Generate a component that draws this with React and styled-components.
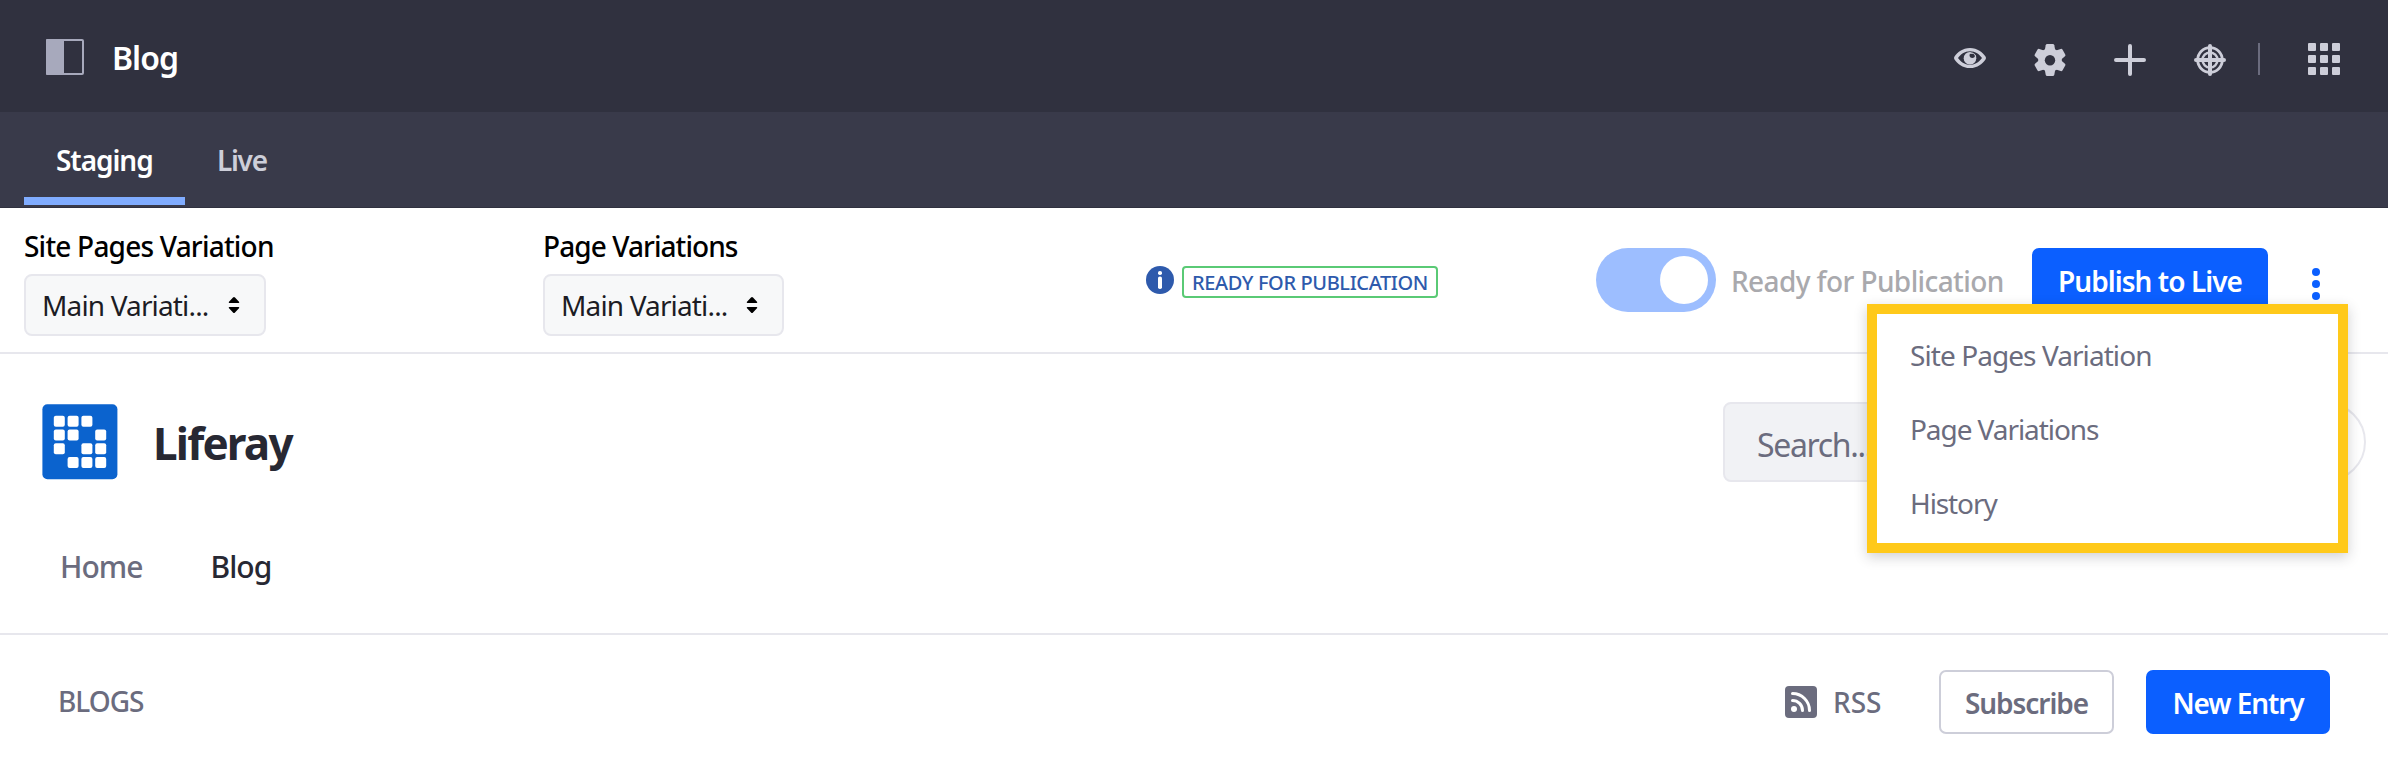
import React from 'react';
import styled, { createGlobalStyle } from 'styled-components';

const GlobalStyle = createGlobalStyle`
  * { box-sizing: border-box; }
  body {
    margin: 0;
    background: #fff;
    font-family: 'Noto Sans', 'Open Sans', sans-serif;
    font-size: 28px;
    color: #272833;
  }
`;

const Page = styled.div`
  position: relative;
  height: 781px;
  overflow: hidden;
`;

const Label = styled.span`
  white-space: pre;
  font-weight: ${(p) => p.$weight || 500};
  letter-spacing: ${(p) => p.$track || 0}px;
`;

/* Top control bar */
const ControlBar = styled.header`
  display: flex;
  align-items: center;
  justify-content: space-between;
  height: 112px;
  padding: 2px 48px 0 46px;
  background: #30313f;
`;

const BarTitle = styled.div`
  display: flex;
  align-items: center;
  gap: 28px;
  color: #fff;
  font-size: 32px;
`;

const BarIcons = styled.div`
  display: flex;
  align-items: center;
  gap: 48px;
  padding-top: 6px;
  color: #cdced9;

  svg { display: block; }
`;

const IconGroup = styled.div`
  display: flex;
  align-items: center;
  gap: 32px;
`;

const AppsGroup = styled(IconGroup)`
  gap: 48px;
  margin-top: -2px;
`;

const Divider = styled.span`
  width: 2px;
  height: 32px;
  margin-top: -1px;
  background: #6b6c7e;
`;

/* Tabs */
const Tabs = styled.nav`
  display: flex;
  height: 96px;
  padding-left: 24px;
  background: #393a4a;
  border-bottom: 1px solid #30313f;
`;

const Tab = styled.a`
  display: flex;
  align-items: center;
  height: 93px;
  padding: 2px 31px 0 32px;
  color: ${(p) => (p.$active ? '#fff' : '#cdced9')};
  box-shadow: ${(p) => (p.$active ? 'inset 0 -8px 0 #80acff' : 'none')};
  width: ${(p) => (p.$active ? '161px' : 'auto')};
`;

/* Staging bar */
const StagingBar = styled.section`
  display: flex;
  height: 146px;
  padding: 18px 60px 0 24px;
  border-bottom: 2px solid #e7e7ed;
`;

const Field = styled.div`
  display: flex;
  flex-direction: column;
  width: ${(p) => p.$width}px;
  padding-top: 1px;
  gap: 9px;
  line-height: 38px;
  color: #000;
`;

const Select = styled.div`
  display: flex;
  align-items: center;
  justify-content: space-between;
  width: ${(p) => p.$width}px;
  height: 62px;
  padding: 0 24px 0 16px;
  border: 2px solid #e7e7ed;
  border-radius: 8px;
  background: #f7f8f9;
  color: #1c1c24;
`;

const Status = styled.div`
  display: flex;
  align-items: flex-start;
  gap: 8px;
  padding-top: 40px;
  width: 450px;
`;

const StatusBadge = styled.span`
  display: flex;
  align-items: center;
  height: 32px;
  width: 256px;
  padding: 1px 0 0 8px;
  border: 2px solid #5aca75;
  border-radius: 4px;
  font-size: 20px;
  color: #2e5aac;
`;

const Actions = styled.div`
  display: flex;
  align-items: center;
  height: 64px;
  margin-top: 22px;
`;

const Toggle = styled.span`
  display: flex;
  justify-content: flex-end;
  align-items: center;
  width: 120px;
  height: 64px;
  padding: 8px;
  border-radius: 32px;
  background: #9dbeff;
`;

const Knob = styled.span`
  width: 48px;
  height: 48px;
  border-radius: 50%;
  background: #fff;
`;

const ToggleLabel = styled.span`
  width: 301px;
  margin-left: 15px;
  padding-top: 1px;
  color: #a9a9ad;
`;

const Button = styled.button`
  display: flex;
  align-items: center;
  justify-content: center;
  width: ${(p) => p.$width}px;
  height: 64px;
  padding: 1px 0 0;
  font: inherit;
  border-radius: 7px;
  border: 2px solid ${(p) => (p.$primary ? '#0b5fff' : '#cdced9')};
  background: ${(p) => (p.$primary ? '#0b5fff' : '#fff')};
  color: ${(p) => (p.$primary ? '#fff' : '#6b6c7e')};
`;

const Kebab = styled.span`
  display: flex;
  flex-direction: column;
  gap: 4px;
  margin: 8px 0 0 44px;
`;

const KebabDot = styled.span`
  width: 8px;
  height: 8px;
  border-radius: 50%;
  background: #0b5fff;
`;

const Menu = styled.div`
  position: absolute;
  top: 304px;
  left: 1867px;
  width: 481px;
  height: 249px;
  padding: 4px 0 0 33px;
  border: 10px solid #ffc91a;
  background: #fff;
  box-shadow: 0 4px 12px rgba(39, 40, 51, 0.22);
`;

const MenuItem = styled.div`
  height: 74px;
  line-height: 75px;
  color: #6b6c7e;
`;

/* Site header */
const SiteHeader = styled.section`
  height: 281px;
  border-bottom: 2px solid #e7e7ed;
`;

const BrandRow = styled.div`
  display: flex;
  align-items: center;
  justify-content: space-between;
  height: 176px;
  padding: 0 22px 0 42px;
`;

const Brand = styled.div`
  display: flex;
  align-items: center;
  gap: 35px;
  font-size: 44px;
  line-height: 60px;

  span { padding-top: 2px; }
`;

const SearchArea = styled.div`
  display: flex;
  gap: 46px;
`;

const SearchBox = styled.div`
  display: flex;
  align-items: center;
  width: 517px;
  height: 80px;
  padding: 5px 0 0 32px;
  border: 2px solid #e7e7ed;
  border-radius: 8px;
  background: #f1f2f5;
  color: #6b6c7e;
  font-size: 32px;
`;

const Avatar = styled.span`
  width: 80px;
  height: 80px;
  border: 2px solid #e7e7ed;
  border-radius: 50%;
`;

const SiteNav = styled.nav`
  display: flex;
  gap: 68px;
  padding: 17px 0 0 60px;
  font-size: 30px;
  line-height: 40px;
`;

const SiteLink = styled.a`
  color: ${(p) => (p.$active ? '#272833' : '#6b6c7e')};
`;

/* Blogs toolbar */
const BlogsBar = styled.section`
  display: flex;
  align-items: center;
  justify-content: space-between;
  padding: 35px 58px 0 58px;
  color: #6b6c7e;
`;

const BlogsTitle = styled.div`
  padding-bottom: 2px;
`;

const BlogsActions = styled.div`
  display: flex;
  align-items: center;
  gap: 32px;
`;

const Rss = styled.a`
  display: flex;
  align-items: center;
  gap: 16px;
  width: 122px;
`;

const PanelIcon = () => (
  <svg width="38" height="36" viewBox="0 0 38 36">
    <rect x="1" y="1" width="36" height="34" rx="1" fill="none" stroke="#a7a9bc" strokeWidth="2" />
    <rect x="0" y="0" width="18" height="36" rx="1" fill="#a7a9bc" />
  </svg>
);

const EyeIcon = () => (
  <svg width="32" height="36" viewBox="0 0 32 36">
    <path
      fill="currentColor"
      fillRule="evenodd"
      d="M16 6C8.5 6 3.200 10.600 .5 14.600Q-.4 16 .5 17.400C3.200 21.400 8.500 26 16 26S28.800 21.400 31.500 17.400Q32.400 16 31.500 14.600C28.800 10.600 23.500 6 16 6ZM16 9.200C21.500 9.200 25.500 12.400 28 16C25.500 19.600 21.500 22.800 16 22.800S6.500 19.600 4 16C6.500 12.400 10.500 9.200 16 9.200Z"
    />
    <circle cx="16" cy="16.200" r="6.300" fill="currentColor" />
    <circle cx="18.300" cy="13.300" r="2.700" fill="#30313f" />
    <path d="M16.200 11.500Q20.300 10.400 21.600 14.300" fill="none" stroke="currentColor" strokeWidth="1" />
  </svg>
);

const GearIcon = () => (
  <svg width="32" height="32" viewBox="0 0 32 32">
    <g fill="currentColor">
      <circle cx="16" cy="16" r="11.800" />
      {[0, 60, 120].map((a) => (
        <path
          key={a}
          transform={`rotate(${a} 16 16)`}
          d="M13.200 0H18.800Q20 0 20.300 1.200L21.200 6V26L20.300 30.800Q20 32 18.800 32H13.200Q12 32 11.700 30.800L10.800 26V6L11.700 1.200Q12 0 13.200 0Z"
        />
      ))}
    </g>
    <circle cx="16" cy="16.200" r="5.200" fill="#30313f" />
  </svg>
);

const PlusIcon = () => (
  <svg width="32" height="32" viewBox="0 0 32 32" stroke="currentColor" strokeWidth="4" strokeLinecap="round">
    <path d="M16 2V30M2 16H30" />
  </svg>
);

const TargetIcon = () => (
  <svg width="32" height="32" viewBox="0 0 32 32" fill="none" stroke="currentColor">
    <circle cx="16" cy="16" r="12.300" strokeWidth="2.800" />
    <circle cx="16" cy="16" r="7.500" strokeWidth="2.400" />
    <path d="M16 2V30M2 16H30" strokeWidth="4" strokeLinecap="round" />
  </svg>
);

const GridIcon = () => (
  <svg width="32" height="32" viewBox="0 0 32 32" fill="currentColor">
    {[0, 12, 24].map((y) => [0, 12, 24].map((x) => <rect key={`${x}-${y}`} x={x} y={y} width="8" height="8" rx="1" />))}
  </svg>
);

const CaretIcon = () => (
  <svg width="12" height="16" viewBox="0 0 12 16" fill="#000">
    <path d="M6 0Q6.500 0 7 .5L11.200 5Q11.500 6 10.500 6H1.500Q.5 6 .8 5L5 .5Q5.500 0 6 0ZM6 16Q6.500 16 7 15.500L11.200 11Q11.500 10 10.500 10H1.500Q.5 10 .8 11L5 15.500Q5.500 16 6 16Z" />
  </svg>
);

const InfoIcon = () => (
  <svg width="28" height="28" viewBox="0 0 28 28">
    <circle cx="14" cy="14" r="14" fill="#2e5aac" />
    <rect x="12" y="5" width="4" height="4" rx="1.800" fill="#fff" />
    <rect x="12" y="10.500" width="4" height="12.500" rx="1.800" fill="#fff" />
  </svg>
);

const LOGO_CELLS = [[0, 1, 2], [0, 1, 3], [0, 2, 3], [1, 2, 3]];

const LogoIcon = () => (
  <svg width="76" height="76" viewBox="0 0 76 76">
    <rect x=".4" y=".3" width="75" height="75" rx="5" fill="#0b63ce" />
    {LOGO_CELLS.map((cols, row) =>
      cols.map((c) => (
        <rect key={`${row}-${c}`} x={11.8 + c * 13.8} y={11.7 + row * 13.8} width="11" height="11" rx="2" fill="#fff" />
      ))
    )}
  </svg>
);

const RssIcon = () => (
  <svg width="32" height="32" viewBox="0 0 32 32">
    <rect width="32" height="32" rx="4" fill="#6b6c7e" />
    <circle cx="9" cy="23" r="3" fill="#fff" />
    <path d="M7.500 14.500A10 10 0 0 1 17.500 24.500M7.500 7.500A17 17 0 0 1 24.500 24.500" fill="none" stroke="#fff" strokeWidth="3" strokeLinecap="round" />
  </svg>
);

const VariationField = ({ label, track, width, selectWidth }) => (
  <Field $width={width}>
    <Label $track={track}>{label}</Label>
    <Select $width={selectWidth}>
      <Label $weight={400} $track={-0.85}>Main Variati...</Label>
      <CaretIcon />
    </Select>
  </Field>
);

export default function App() {
  return (
    <Page>
      <GlobalStyle />
      <ControlBar>
        <BarTitle>
          <PanelIcon />
          <Label $weight={600} $track={-1}>Blog</Label>
        </BarTitle>
        <BarIcons>
          <EyeIcon />
          <GearIcon />
          <PlusIcon />
          <IconGroup>
            <TargetIcon />
            <AppsGroup>
              <Divider />
              <GridIcon />
            </AppsGroup>
          </IconGroup>
        </BarIcons>
      </ControlBar>

      <Tabs>
        <Tab $active><Label $weight={600} $track={-1.05}>Staging</Label></Tab>
        <Tab><Label $weight={600} $track={-1.3}>Live</Label></Tab>
      </Tabs>

      <StagingBar>
        <VariationField label="Site Pages Variation" track={-0.79} width={519} selectWidth={242} />
        <VariationField label="Page Variations" track={-0.93} width={603} selectWidth={241} />
        <Status>
          <InfoIcon />
          <StatusBadge><Label $track={-0.38}>READY FOR PUBLICATION</Label></StatusBadge>
        </Status>
        <Actions>
          <Toggle><Knob /></Toggle>
          <ToggleLabel><Label $track={-0.6}>Ready for Publication</Label></ToggleLabel>
          <Button $primary $width={236}><Label $weight={600} $track={-0.95}>Publish to Live</Label></Button>
          <Kebab><KebabDot /><KebabDot /><KebabDot /></Kebab>
        </Actions>
      </StagingBar>

      <SiteHeader>
        <BrandRow>
          <Brand>
            <LogoIcon />
            <Label $weight={700} $track={-1.8}>Liferay</Label>
          </Brand>
          <SearchArea>
            <SearchBox><Label $weight={400} $track={-1.35}>Search...</Label></SearchBox>
            <Avatar />
          </SearchArea>
        </BrandRow>
        <SiteNav>
          <SiteLink><Label $track={-1}>Home</Label></SiteLink>
          <SiteLink $active><Label $track={-0.9}>Blog</Label></SiteLink>
        </SiteNav>
      </SiteHeader>

      <BlogsBar>
        <BlogsTitle><Label $track={-1}>BLOGS</Label></BlogsTitle>
        <BlogsActions>
          <Rss><RssIcon /><Label>RSS</Label></Rss>
          <Button $width={175}><Label $weight={600} $track={-1.05}>Subscribe</Label></Button>
          <Button $primary $width={184}><Label $weight={600} $track={-1.1}>New Entry</Label></Button>
        </BlogsActions>
      </BlogsBar>

      <Menu>
        <MenuItem><Label $weight={400} $track={-0.93}>Site Pages Variation</Label></MenuItem>
        <MenuItem><Label $weight={400} $track={-1.07}>Page Variations</Label></MenuItem>
        <MenuItem><Label $weight={400} $track={-1.1}>History</Label></MenuItem>
      </Menu>
    </Page>
  );
}
